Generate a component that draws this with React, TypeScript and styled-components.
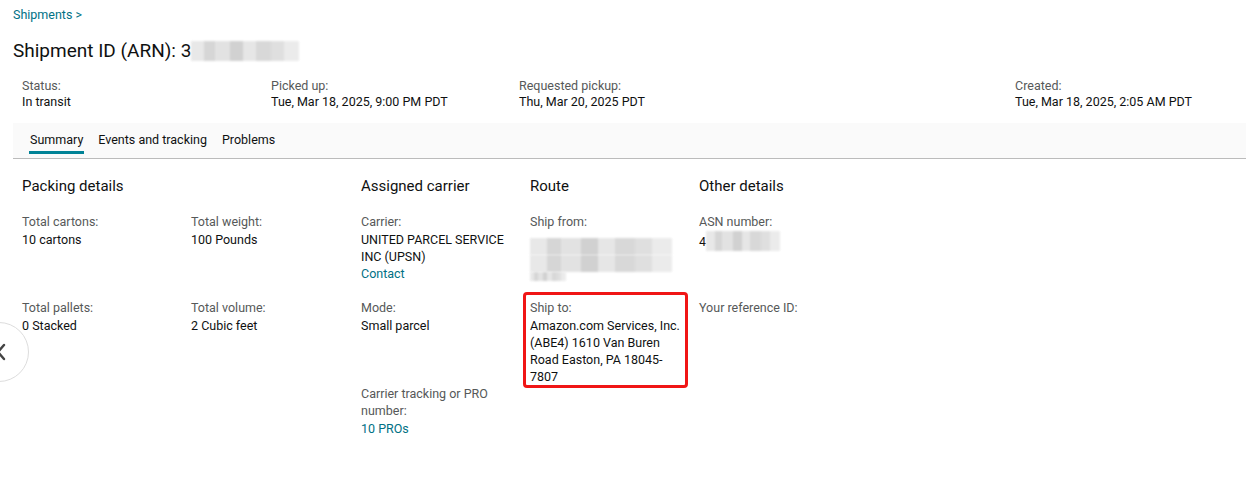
import React from 'react';
import styled, { createGlobalStyle } from 'styled-components';

const GlobalStyle = createGlobalStyle`
  html, body {
    margin: 0;
    padding: 0;
    background: #fff;
  }
  body {
    font-family: Roboto, "Liberation Sans", Arial, sans-serif;
    font-size: 12.5px;
    color: #0f1111;
  }
`;

const Page = styled.div`
  position: relative;
  width: 1246px;
  height: 486px;
  overflow: hidden;
  padding: 7px 0 0 13px;
  box-sizing: border-box;
`;

const Breadcrumb = styled.a`
  display: block;
  font-size: 12.5px;
  line-height: 16px;
  color: #007185;
  text-decoration: none;
`;

const Title = styled.h1`
  margin: 15px 0 0;
  font-size: 19px;
  line-height: 26px;
  font-weight: 400;
  color: #0f1111;
  display: flex;
  align-items: center;
`;

const Redacted = styled.span<{ w: number; h: number }>`
  display: inline-block;
  width: ${(p) => p.w}px;
  height: ${(p) => p.h}px;
  background:
    linear-gradient(90deg,
      #e4e4e4 0 12%, #cfcfcf 12% 22%, #dedede 22% 36%, #c9c9c9 36% 48%,
      #e2e2e2 48% 60%, #d2d2d2 60% 74%, #dadada 74% 86%, #e8e8e8 86% 100%);
  filter: blur(1px);
  opacity: 0.85;
`;

const SummaryRow = styled.div`
  display: grid;
  grid-template-columns: 249px 248px 496px auto;
  margin-top: 14px;
  padding-left: 9px;
`;

const Field = styled.div`
  line-height: 16px;
`;

const Label = styled.div`
  color: #565959;
`;

const Value = styled.div`
  color: #0f1111;
`;

const TabBar = styled.div`
  display: flex;
  gap: 15px;
  margin-top: 13px;
  height: 35px;
  padding-left: 17px;
  background: #fafafa;
  border-bottom: 1px solid #bbbbbb;
`;

const Tab = styled.div<{ active?: boolean }>`
  position: relative;
  line-height: 33px;
  color: #0f1111;
  cursor: pointer;
  &::after {
    content: '';
    display: ${(p) => (p.active ? 'block' : 'none')};
    position: absolute;
    left: -1px;
    right: -1px;
    top: 28px;
    height: 3px;
    background: #008296;
  }
`;

const Sections = styled.div`
  display: flex;
  padding-left: 9px;
  margin-top: 17px;
`;

const Section = styled.section<{ width: number }>`
  width: ${(p) => p.width}px;
  flex: none;
`;

const Heading = styled.h2`
  margin: 0 0 17px;
  font-size: 15px;
  line-height: 20px;
  font-weight: 400;
  color: #0f1111;
`;

const PairGrid = styled.div`
  display: grid;
  grid-template-columns: 169px 169px;
`;

const Item = styled.div<{ marked?: boolean }>`
  position: relative;
  min-height: 69px;
  margin-bottom: 17px;
  padding-right: 12px;
  line-height: 17px;
  ${Label} {
    margin-bottom: 1px;
  }
  &::after {
    content: '';
    display: ${(p) => (p.marked ? 'block' : 'none')};
    position: absolute;
    left: -7px;
    top: -7px;
    width: 159px;
    height: 90px;
    border: 3px solid #f01616;
    border-radius: 4px;
  }
`;

const Link = styled.a`
  color: #007185;
  text-decoration: none;
`;

const NavCircle = styled.button`
  position: absolute;
  left: -31px;
  top: 322px;
  width: 60px;
  height: 60px;
  border-radius: 50%;
  border: 1px solid #dddddd;
  background: #fff;
  padding: 0;
  display: flex;
  align-items: center;
  justify-content: flex-end;
  padding-right: 22px;
  box-sizing: border-box;
`;

const Blocks = styled.div`
  display: flex;
  flex-direction: column;
  margin-top: 8px;
`;

export default function App() {
  return (
    <>
      <GlobalStyle />
      <Page>
        <Breadcrumb>Shipments &gt;</Breadcrumb>
        <Title>
          Shipment ID (ARN): 3
          <Redacted w={108} h={20} />
        </Title>

        <SummaryRow>
          <Field>
            <Label>Status:</Label>
            <Value>In transit</Value>
          </Field>
          <Field>
            <Label>Picked up:</Label>
            <Value>Tue, Mar 18, 2025, 9:00 PM PDT</Value>
          </Field>
          <Field>
            <Label>Requested pickup:</Label>
            <Value>Thu, Mar 20, 2025 PDT</Value>
          </Field>
          <Field>
            <Label>Created:</Label>
            <Value>Tue, Mar 18, 2025, 2:05 AM PDT</Value>
          </Field>
        </SummaryRow>

        <TabBar>
          <Tab active>Summary</Tab>
          <Tab>Events and tracking</Tab>
          <Tab>Problems</Tab>
        </TabBar>

        <Sections>
          <Section width={339}>
            <Heading>Packing details</Heading>
            <PairGrid>
              <Item>
                <Label>Total cartons:</Label>
                <Value>10 cartons</Value>
              </Item>
              <Item>
                <Label>Total weight:</Label>
                <Value>100 Pounds</Value>
              </Item>
              <Item>
                <Label>Total pallets:</Label>
                <Value>0 Stacked</Value>
              </Item>
              <Item>
                <Label>Total volume:</Label>
                <Value>2 Cubic feet</Value>
              </Item>
            </PairGrid>
          </Section>

          <Section width={169}>
            <Heading>Assigned carrier</Heading>
            <Item>
              <Label>Carrier:</Label>
              <Value>UNITED PARCEL SERVICE INC (UPSN)</Value>
              <Link>Contact</Link>
            </Item>
            <Item>
              <Label>Mode:</Label>
              <Value>Small parcel</Value>
            </Item>
            <Item>
              <Label>Carrier tracking or PRO number:</Label>
              <Link>10 PROs</Link>
            </Item>
          </Section>

          <Section width={169}>
            <Heading>Route</Heading>
            <Item>
              <Label>Ship from:</Label>
              <Blocks>
                <Redacted w={142} h={17} />
                <Redacted w={142} h={17} />
                <Redacted w={36} h={9} />
              </Blocks>
            </Item>
            <Item marked>
              <Label>Ship to:</Label>
              <Value>Amazon.com Services, Inc. (ABE4) 1610 Van Buren Road Easton, PA 18045-7807</Value>
            </Item>
          </Section>

          <Section width={300}>
            <Heading>Other details</Heading>
            <Item>
              <Label>ASN number:</Label>
              <Value style={{ display: 'flex', alignItems: 'center' }}>
                4<Redacted w={74} h={20} />
              </Value>
            </Item>
            <Item>
              <Label>Your reference ID:</Label>
            </Item>
          </Section>
        </Sections>

        <NavCircle aria-label="Previous">
          <svg width="10" height="18" viewBox="0 0 10 18" fill="none">
            <path d="M8 2 L2 9 L8 16" stroke="#444" strokeWidth="2.4" strokeLinecap="round" strokeLinejoin="round" />
          </svg>
        </NavCircle>
      </Page>
    </>
  );
}
